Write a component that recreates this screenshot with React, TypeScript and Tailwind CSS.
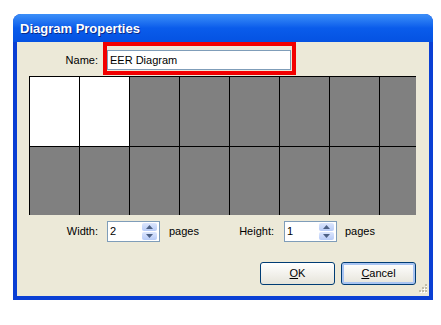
import React from 'react';

const font = { fontFamily: '"Liberation Sans", Arial, sans-serif' };

function SpinBox({ value }: { value: string }) {
  return (
    <div className="flex h-[21px] w-[53px] items-center border border-[#7f9db9] bg-white pl-[2px] pr-[2px]">
      <span className="flex-1 text-[11px] leading-none text-black">{value}</span>
      <div className="flex h-[17px] w-[15px] flex-col gap-[1px]">
        <div className="flex flex-1 items-center justify-center rounded-[2px] bg-gradient-to-b from-[#dce6fd] to-[#b7cbf7]">
          <svg width="7" height="4" viewBox="0 0 7 4">
            <path d="M0 4 L3.5 0 L7 4 Z" fill="#4d6185" />
          </svg>
        </div>
        <div className="flex flex-1 items-center justify-center rounded-[2px] bg-gradient-to-b from-[#dce6fd] to-[#b7cbf7]">
          <svg width="7" height="4" viewBox="0 0 7 4">
            <path d="M0 0 L3.5 4 L7 0 Z" fill="#4d6185" />
          </svg>
        </div>
      </div>
    </div>
  );
}

function XpButton({ label, accel, focused }: { label: string; accel: string; focused?: boolean }) {
  return (
    <button
      className={`flex h-[23px] w-[75px] items-center justify-center rounded-[3px] border border-[#003c74] bg-gradient-to-b from-white to-[#e6e4da] text-[11px] text-black ${
        focused ? 'shadow-[inset_0_0_0_2px_#a8c4f2]' : ''
      }`}
    >
      <span>
        <span className="underline">{accel}</span>
        {label.slice(1)}
      </span>
    </button>
  );
}

export default function App() {
  // first row: 2 pages used, rest grey
  const cols = Array.from({ length: 8 });

  return (
    <div className="h-[325px] w-[441px] bg-white pl-[13px] pt-[14px]" style={font}>
      <div className="flex h-[286px] w-[420px] flex-col overflow-hidden rounded-t-[8px] bg-[#0a3fd4]">
        {/* title bar */}
        <div className="flex h-[28px] items-center bg-gradient-to-b from-[#3c8ff8] via-[#0a5ceb] to-[#0552e2] pl-[7px] pt-[2px]">
          <span className="text-[13px] font-bold text-white [text-shadow:1px_1px_0_#0a2a8a]">
            Diagram Properties
          </span>
        </div>

        {/* client area */}
        <div className="relative mx-[4px] mb-[4px] flex flex-1 flex-col bg-[#ece9d8] px-[12px]">
          {/* name */}
          <div className="mt-[8px] flex items-center">
            <span className="w-[69px] text-right text-[11px] text-black">Name:</span>
            <div className="relative ml-[9px]">
              <div className="flex h-[20px] w-[184px] items-center border border-[#7f9db9] bg-white pl-[2px] text-[11px] text-black">
                EER Diagram
              </div>
              <span className="pointer-events-none absolute -bottom-[5px] -left-[4px] -right-[5px] -top-[8px] border-[4px] border-[#f20000]" />
            </div>
          </div>

          {/* page grid */}
          <div className="mt-[6px] h-[139px] w-[387px] overflow-hidden border-l border-t border-black">
            {[0, 1].map((r) => (
              <div key={r} className="flex w-max">
                {cols.map((_, c) => (
                  <div
                    key={c}
                    className={`h-[70px] w-[50px] shrink-0 border-b border-r border-black ${
                      r === 0 && c < 2 ? 'bg-white' : 'bg-[#808080]'
                    }`}
                  />
                ))}
              </div>
            ))}
          </div>

          {/* width / height */}
          <div className="mt-[6px] flex items-center text-[11px] text-black">
            <span className="w-[69px] text-right">Width:</span>
            <div className="ml-[9px]">
              <SpinBox value="2" />
            </div>
            <span className="ml-[9px] w-[54px]">pages</span>
            <span className="w-[51px] text-right">Height:</span>
            <div className="ml-[10px]">
              <SpinBox value="1" />
            </div>
            <span className="ml-[8px]">pages</span>
          </div>

          {/* buttons */}
          <div className="mt-[20px] flex justify-end gap-[6px] pr-[1px]">
            <XpButton label="OK" accel="O" />
            <XpButton label="Cancel" accel="C" focused />
          </div>

          {/* size grip */}
          <svg className="absolute bottom-[2px] right-[2px]" width="10" height="10" viewBox="0 0 10 10">
            {[
              [8, 0],
              [5, 3],
              [8, 3],
              [2, 6],
              [5, 6],
              [8, 6],
            ].map(([x, y], i) => (
              <g key={i}>
                <rect x={x + 1} y={y + 1} width="2" height="2" fill="#ffffff" />
                <rect x={x} y={y} width="2" height="2" fill="#c1bda9" />
              </g>
            ))}
          </svg>
        </div>
      </div>
    </div>
  );
}
